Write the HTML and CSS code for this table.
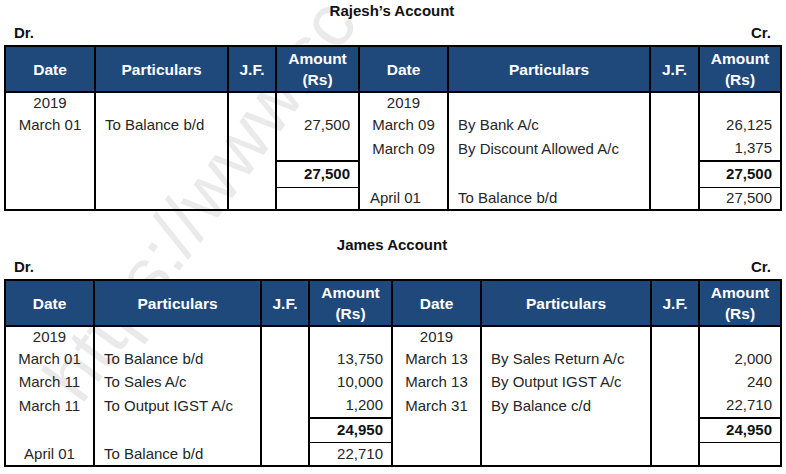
FILE: index.html
```html
<!DOCTYPE html>
<html>
<head>
<meta charset="utf-8">
<link rel="stylesheet" href="styles.css">
</head>
<body>
<div class="page">
  <div class="watermark" aria-hidden="true">https://www.sc</div>

  <section class="account">
    <h2 class="title">Rajesh’s Account</h2>
    <div class="drcr"><span>Dr.</span><span>Cr.</span></div>
    <table class="ledger">
      <colgroup>
        <col style="width:90px"><col style="width:133px"><col style="width:48px"><col style="width:83px">
        <col style="width:89px"><col style="width:202px"><col style="width:49px"><col style="width:82px">
      </colgroup>
      <thead>
        <tr>
          <th>Date</th><th>Particulars</th><th>J.F.</th><th>Amount<br>(Rs)</th>
          <th>Date</th><th>Particulars</th><th>J.F.</th><th>Amount<br>(Rs)</th>
        </tr>
      </thead>
      <tbody>
        <tr class="r-year">
          <td class="date">2019</td><td></td><td></td><td></td>
          <td class="date">2019</td><td></td><td></td><td></td>
        </tr>
        <tr class="r-a">
          <td class="date">March 01</td><td class="part">To Balance b/d</td><td></td><td class="amt">27,500</td>
          <td class="date">March 09</td><td class="part">By Bank A/c</td><td></td><td class="amt">26,125</td>
        </tr>
        <tr class="r-b">
          <td></td><td></td><td></td><td></td>
          <td class="date">March 09</td><td class="part">By Discount Allowed A/c</td><td></td><td class="amt">1,375</td>
        </tr>
        <tr class="r-total">
          <td></td><td></td><td></td><td class="amt total">27,500</td>
          <td></td><td></td><td></td><td class="amt total">27,500</td>
        </tr>
        <tr class="r-last">
          <td></td><td></td><td></td><td class="amt after"></td>
          <td class="date left">April 01</td><td class="part">To Balance b/d</td><td></td><td class="amt after">27,500</td>
        </tr>
      </tbody>
    </table>
  </section>

  <section class="account second">
    <h2 class="title">James Account</h2>
    <div class="drcr"><span>Dr.</span><span>Cr.</span></div>
    <table class="ledger">
      <colgroup>
        <col style="width:89px"><col style="width:167px"><col style="width:48px"><col style="width:83px">
        <col style="width:89px"><col style="width:170px"><col style="width:48px"><col style="width:82px">
      </colgroup>
      <thead>
        <tr>
          <th>Date</th><th>Particulars</th><th>J.F.</th><th>Amount<br>(Rs)</th>
          <th>Date</th><th>Particulars</th><th>J.F.</th><th>Amount<br>(Rs)</th>
        </tr>
      </thead>
      <tbody>
        <tr class="r-year">
          <td class="date">2019</td><td></td><td></td><td></td>
          <td class="date">2019</td><td></td><td></td><td></td>
        </tr>
        <tr class="r-a">
          <td class="date">March 01</td><td class="part">To Balance b/d</td><td></td><td class="amt">13,750</td>
          <td class="date">March 13</td><td class="part">By Sales Return A/c</td><td></td><td class="amt">2,000</td>
        </tr>
        <tr class="r-a">
          <td class="date">March 11</td><td class="part">To Sales A/c</td><td></td><td class="amt">10,000</td>
          <td class="date">March 13</td><td class="part">By Output IGST A/c</td><td></td><td class="amt">240</td>
        </tr>
        <tr class="r-b">
          <td class="date">March 11</td><td class="part">To Output IGST A/c</td><td></td><td class="amt">1,200</td>
          <td class="date">March 31</td><td class="part">By Balance c/d</td><td></td><td class="amt">22,710</td>
        </tr>
        <tr class="r-total">
          <td></td><td></td><td></td><td class="amt total">24,950</td>
          <td></td><td></td><td></td><td class="amt total">24,950</td>
        </tr>
        <tr class="r-last">
          <td class="date">April 01</td><td class="part">To Balance b/d</td><td></td><td class="amt after">22,710</td>
          <td></td><td></td><td></td><td class="amt after"></td>
        </tr>
      </tbody>
    </table>
  </section>
</div>
</body>
</html>
```

FILE: styles.css
```css
* { box-sizing: border-box; }

html, body {
  margin: 0;
  padding: 0;
  background: #ffffff;
}

body {
  font-family: "Liberation Sans", Arial, sans-serif;
  color: #262626;
  width: 786px;
  height: 474px;
  overflow: hidden;
}

.page {
  position: relative;
  padding-left: 4px;
  width: 786px;
  height: 474px;
}

.watermark {
  position: absolute;
  left: -70px;
  top: 160px;
  width: 540px;
  text-align: center;
  font-size: 74px;
  line-height: 80px;
  font-weight: normal;
  color: #d6d6d6;
  opacity: 0.5;
  transform: rotate(-54deg);
  transform-origin: center center;
  white-space: nowrap;
  z-index: 0;
  pointer-events: none;
}

.account {
  position: relative;
  z-index: 1;
  width: 776px;
}

.account.second {
  margin-top: 23px;
}

.title {
  margin: 0;
  height: 22px;
  line-height: 22px;
  font-size: 15px;
  font-weight: bold;
  text-align: center;
  color: #111;
}

.drcr {
  display: flex;
  justify-content: space-between;
  height: 23px;
  line-height: 22px;
  padding: 0 9px 0 10px;
  font-size: 15px;
  font-weight: bold;
  color: #111;
}

.ledger {
  width: 776px;
  table-layout: fixed;
  border-collapse: collapse;
  border: 2px solid #000;
  font-size: 15px;
}

.ledger th {
  height: 46px;
  background: #1f487b;
  color: #ffffff;
  font-weight: bold;
  font-size: 15.5px;
  line-height: 21px;
  border: 2px solid #000;
  padding: 0 2px;
  text-align: center;
  vertical-align: middle;
}

.ledger td {
  border-left: 2px solid #000;
  border-right: 2px solid #000;
  padding: 0;
  line-height: 18px;
  vertical-align: middle;
  white-space: nowrap;
}

.ledger .date { text-align: center; }
.ledger .date.left { text-align: left; padding-left: 10px; }
.ledger .part { text-align: left; padding-left: 9px; }
.ledger .amt { text-align: right; padding-right: 8px; }

.ledger .total {
  border-top: 2px solid #000;
  font-weight: bold;
  color: #111;
}

.ledger .after {
  border-top: 1px solid #000;
}

.r-year td { height: 21px; }
.r-a td { height: 23px; }
.r-b td { height: 25px; }
.r-total td { height: 26px; }
.r-last td { height: 23px; }

.second .r-total td { height: 24px; }
.second .r-last td { height: 24px; }
```
